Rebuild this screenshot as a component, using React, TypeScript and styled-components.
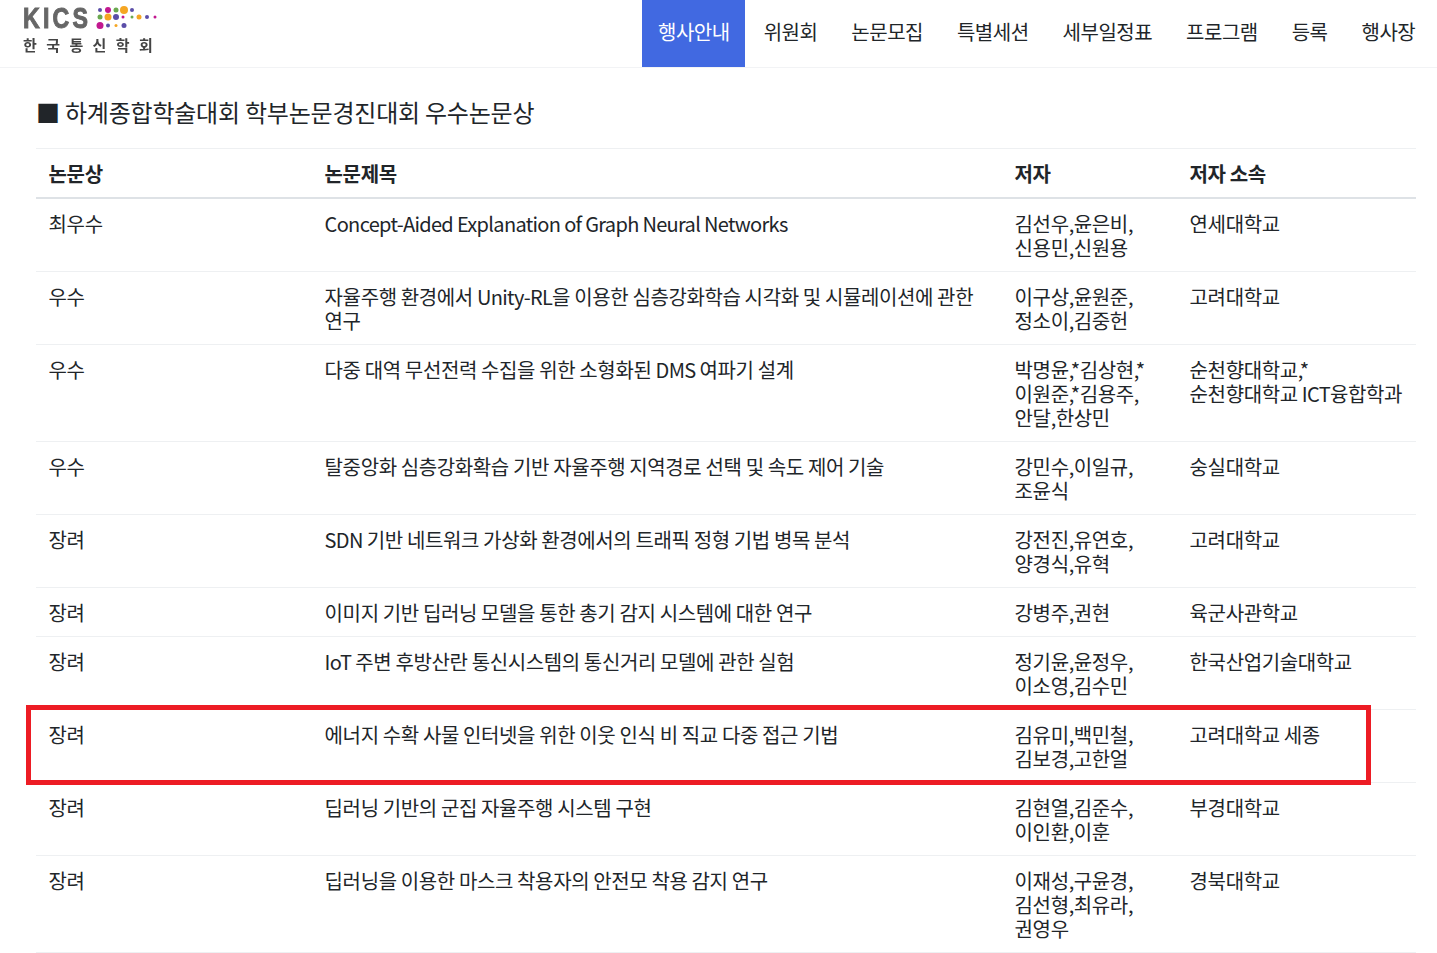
import React from "react";
import styled, { createGlobalStyle } from "styled-components";

const Global = createGlobalStyle`
  html, body { margin: 0; padding: 0; background: #fff; }
  body { font-family: "Noto Sans CJK KR", "Noto Sans", sans-serif; color: #212529; }
`;
const Page = styled.div`width: 1437px; height: 953px; overflow: hidden;`;
const Header = styled.header`
  display: flex; justify-content: space-between; height: 67px;
  border-bottom: 1px solid #f2f3f5;
`;
const Logo = styled.div`
  position: relative; display: flex; flex-direction: column; padding: 5px 0 0 23px; width: 140px; filter: blur(0.4px);
`;
const LogoTop = styled.div`display: flex; align-items: center; height: 27px;`;
const LogoWord = styled.span`
  font: 700 29px/27px "Liberation Sans", sans-serif; letter-spacing: 4px; color: #666;
  -webkit-text-stroke: 1px #666;
  transform: scaleX(.8); transform-origin: left; width: 67px; white-space: nowrap;
`;
const LogoSub = styled.div`
  font-size: 15px; line-height: 20px; font-weight: 700; letter-spacing: 9.4px; color: #444; white-space: nowrap; margin-top: 3px;
`;
const LogoDots = styled.svg`position: absolute; left: 0; top: 0; width: 170px; height: 32px;`;
const Nav = styled.nav`display: flex; padding-right: 4.8px;`;
const NavItem = styled.a<{ $active?: boolean }>`
  display: flex; align-items: center; height: 67px; box-sizing: border-box;
  font-size: 20px; letter-spacing: -0.5px;
  padding: ${(p) => (p.$active ? "0 15px 4px 16px" : "0 17px 4px")};
  margin-right: ${(p) => (p.$active ? "2px" : "0")};
  color: ${(p) => (p.$active ? "#fff" : "#212529")};
  background: ${(p) => (p.$active ? "#4169e1" : "transparent")};
`;
const Main = styled.main`position: relative; padding: 0 21px 0 36px;`;
const Title = styled.h2`
  margin: 0; height: 80px; padding-top: 26px; box-sizing: border-box;
  font-size: 24px; line-height: 36px; font-weight: 400; letter-spacing: -0.22px; color: #212529;
  white-space: nowrap;
`;
const Table = styled.table`
  width: 1380px; border-collapse: collapse; table-layout: fixed;
  font-size: 20px; line-height: 24px; letter-spacing: -0.38px; word-break: keep-all;
`;
const Th = styled.th<{ $w: number }>`
  width: ${(p) => p.$w}px; box-sizing: border-box; padding: 13px 12px 11px 12.6px; text-align: left; font-weight: 700;
  border-top: 1px solid #eef0f2; border-bottom: 2px solid #dee2e6; vertical-align: bottom;
`;
const Td = styled.td`
  padding: 13px 12px 11px 12.6px; vertical-align: top; border-bottom: 1px solid #eef0f2;
`;
const Latin = styled.span`letter-spacing: -0.68px;`;
const Highlight = styled.div`
  position: absolute; left: 26px; top: 637px; width: 1345px; height: 80px; box-sizing: border-box;
  border: 5px solid #ed1c24;
`;

const rows: [string, string, string[], string[]][] = [
  ["최우수", "Concept-Aided Explanation of Graph Neural Networks", ["김선우,윤은비,", "신용민,신원용"], ["연세대학교"]],
  ["우수", "자율주행 환경에서 Unity-RL을 이용한 심층강화학습 시각화 및 시뮬레이션에 관한 연구", ["이구상,윤원준,", "정소이,김중헌"], ["고려대학교"]],
  ["우수", "다중 대역 무선전력 수집을 위한 소형화된 DMS 여파기 설계", ["박명윤,*김상현,*", "이원준,*김용주,", "안달,한상민"], ["순천향대학교,*", "순천향대학교 ICT융합학과"]],
  ["우수", "탈중앙화 심층강화확습 기반 자율주행 지역경로 선택 및 속도 제어 기술", ["강민수,이일규,", "조윤식"], ["숭실대학교"]],
  ["장려", "SDN 기반 네트워크 가상화 환경에서의 트래픽 정형 기법 병목 분석", ["강전진,유연호,", "양경식,유혁"], ["고려대학교"]],
  ["장려", "이미지 기반 딥러닝 모델을 통한 총기 감지 시스템에 대한 연구", ["강병주,권현"], ["육군사관학교"]],
  ["장려", "IoT 주변 후방산란 통신시스템의 통신거리 모델에 관한 실험", ["정기윤,윤정우,", "이소영,김수민"], ["한국산업기술대학교"]],
  ["장려", "에너지 수확 사물 인터넷을 위한 이웃 인식 비 직교 다중 접근 기법", ["김유미,백민철,", "김보경,고한얼"], ["고려대학교 세종"]],
  ["장려", "딥러닝 기반의 군집 자율주행 시스템 구현", ["김현열,김준수,", "이인환,이훈"], ["부경대학교"]],
  ["장려", "딥러닝을 이용한 마스크 착용자의 안전모 착용 감지 연구", ["이재성,구윤경,", "김선형,최유라,", "권영우"], ["경북대학교"]],
];

const navItems = ["행사안내", "위원회", "논문모집", "특별세션", "세부일정표", "프로그램", "등록", "행사장"];

const dots: [number, number, number, string][] = [
  [100, 10, 2, "#5b4ea8"], [108, 10, 3, "#c2188f"], [116, 10, 2.5, "#6aa84f"], [124, 10, 4, "#f5a623"], [132, 10, 2, "#5b4ea8"],
  [100, 17, 2.5, "#6aa84f"], [108, 17, 3.5, "#f5a623"], [116, 17, 3, "#5b4ea8"], [123, 17, 1.5, "#c2188f"], [132, 17, 1.5, "#6aa84f"],
  [139, 17, 2.5, "#f5a623"], [147, 17, 2, "#5b4ea8"], [155, 17, 1.5, "#c2188f"],
  [100, 25.5, 3.5, "#c2188f"], [108, 25.5, 2, "#5b4ea8"], [116, 25.5, 1.5, "#f5a623"], [124, 25.5, 2.5, "#5b4ea8"],
];

function Mixed({ text }: { text: string }) {
  const parts = text.split(/([A-Za-z][A-Za-z\- ]*[A-Za-z])/);
  return <>{parts.map((p, i) => (i % 2 ? <Latin key={i}>{p}</Latin> : p))}</>;
}

export default function App() {
  return (
    <Page>
      <Global />
      <Header>
        <Logo>
          <LogoTop>
            <LogoWord>KICS</LogoWord>
            <LogoDots viewBox="0 0 170 32">
              {dots.map(([x, y, r, c], i) => <circle key={i} cx={x} cy={y} r={r} fill={c} />)}
            </LogoDots>
          </LogoTop>
          <LogoSub>한국통신학회</LogoSub>
        </Logo>
        <Nav>
          {navItems.map((t, i) => <NavItem key={t} $active={i === 0}>{t}</NavItem>)}
        </Nav>
      </Header>
      <Main>
        <Title>■ 하계종합학술대회 학부논문경진대회 우수논문상</Title>
        <Table>
          <thead>
            <tr>
              <Th $w={276}>논문상</Th><Th $w={690}>논문제목</Th><Th $w={175}>저자</Th><Th $w={239}>저자 소속</Th>
            </tr>
          </thead>
          <tbody>
            {rows.map((r, i) => (
              <tr key={i}>
                <Td>{r[0]}</Td>
                <Td><Mixed text={r[1]} /></Td>
                <Td>{r[2].map((l) => <div key={l}>{l}</div>)}</Td>
                <Td>{r[3].map((l) => <div key={l}><Mixed text={l} /></div>)}</Td>
              </tr>
            ))}
          </tbody>
        </Table>
        <Highlight />
      </Main>
    </Page>
  );
}
